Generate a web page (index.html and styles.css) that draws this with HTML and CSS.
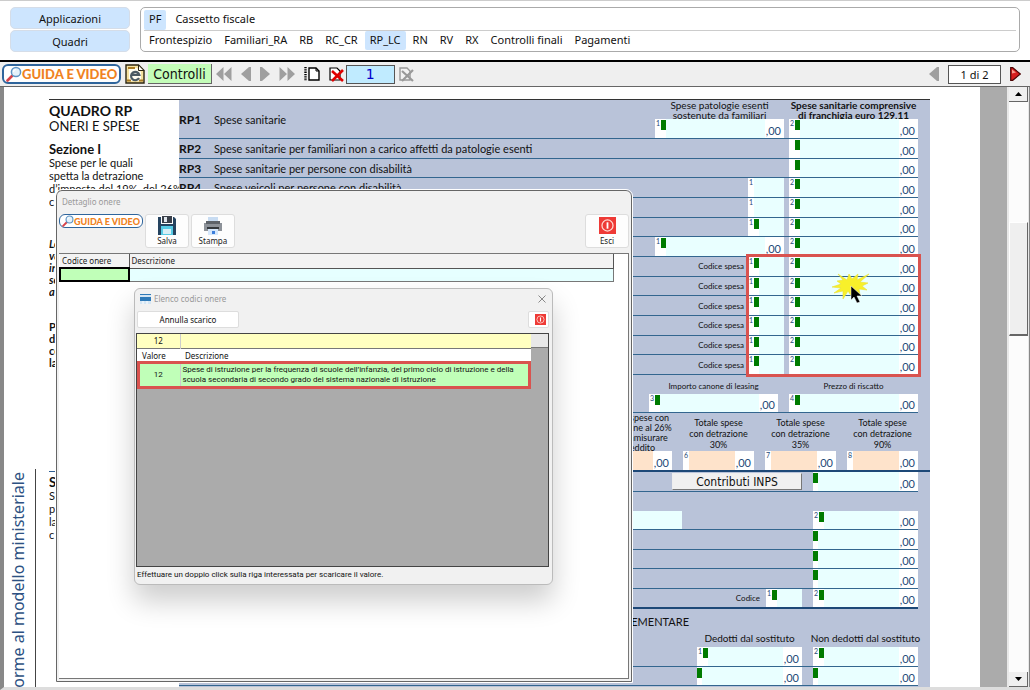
FILE: index.html
```html
<!DOCTYPE html>
<html lang="it">
<head>
<meta charset="utf-8">
<title>Quadro RP</title>
<link rel="stylesheet" href="styles.css">
</head>
<body>
<svg class="defs" aria-hidden="true">
  <symbol id="lens" viewBox="0 0 16 16"><path d="M1.5 14.5 6 10" stroke="#d8434a" stroke-width="2.6" stroke-linecap="round"/><circle cx="10" cy="6" r="4.6" fill="#e4f1fa" stroke="#5d93c4" stroke-width="1.5"/><path d="M7.5 6a2.5 2.5 0 0 1 2.5-2.5" fill="none" stroke="#fff" stroke-width="1.2"/></symbol>
  <symbol id="power" viewBox="0 0 16 16"><path fill="#ee3a36" d="M0 0h16v16H0z"/><circle cx="8" cy="8" r="5.2" fill="none" stroke="#ffd9d2" stroke-width="1.2"/><path d="M8 5v6" stroke="#fff" stroke-width="1.7"/></symbol>
</svg>
<div class="app">
  <header class="top">
    <div class="modes">
      <button class="mode">Applicazioni</button>
      <button class="mode">Quadri</button>
    </div>
    <nav class="tabs">
      <div class="tabrow apps">
        <a class="tab on" href="#pf">PF</a><a class="tab" href="#cassetto">Cassetto fiscale</a>
      </div>
      <div class="tabrow">
        <a class="tab" href="#f">Frontespizio</a><a class="tab" href="#ra">Familiari_RA</a><a class="tab" href="#rb">RB</a><a class="tab" href="#rc">RC_CR</a><a class="tab on" href="#rp">RP_LC</a><a class="tab" href="#rn">RN</a><a class="tab" href="#rv">RV</a><a class="tab" href="#rx">RX</a><a class="tab" href="#cf">Controlli finali</a><a class="tab" href="#pg">Pagamenti</a>
      </div>
    </nav>
  </header>

  <div class="toolbar">
    <button class="guide"><svg class="lens"><use href="#lens"/></svg>GUIDA E VIDEO</button>
    <button class="icon" aria-label="Documento"><svg width="20" height="20" viewBox="0 0 20 20"><path d="M1 1h12.500l5.500 5.500V19H1z" fill="#f6e2a0" stroke="#2b2410" stroke-width="1.400"/><path d="M4 4h8l4 4v9H4z" fill="#fffdf0"/><path d="M13.500 1v5.500H19z" fill="#fff" stroke="#2b2410"/><path d="M3 4h7M2 16.500h4M14 16.500h4" stroke="#a77a22" stroke-width="2"/><path d="M14 14a4.200 4.200 0 1 1 .3-3.200H7" fill="none" stroke="#4b5a62" stroke-width="2.200"/></svg></button>
    <button class="check">Controlli</button>
    <button class="icon" aria-label="Primo"><svg width="16" height="14" viewBox="0 0 16 14"><path d="M7.500 0v14L0 7zM15.500 0v14L8 7z" fill="#9f9f9f"/></svg></button>
    <button class="icon" aria-label="Precedente"><svg width="10" height="14" viewBox="0 0 10 14"><path d="M8 0h2v14H8L0 7z" fill="#9f9f9f"/></svg></button>
    <button class="icon" aria-label="Successivo"><svg width="10" height="14" viewBox="0 0 10 14"><path d="M0 0h2l8 7-8 7H0z" fill="#9f9f9f"/></svg></button>
    <button class="icon" aria-label="Ultimo"><svg width="16" height="14" viewBox="0 0 16 14"><path d="M.500 0v14L8 7zM8.500 0v14L16 7z" fill="#9f9f9f"/></svg></button>
    <button class="icon" aria-label="Nuovo modulo"><svg width="16" height="14" viewBox="0 0 16 14"><path d="M5 1h7l3 3v9H5z" fill="#fff" stroke="#000" stroke-width="1.400"/><path d="M12 1v3h3" fill="none" stroke="#000"/><path d="M1.500 0v14" stroke="#000" stroke-width="2.400" stroke-dasharray="1.300 1"/></svg></button>
    <button class="icon" aria-label="Elimina modulo"><svg width="15" height="15" viewBox="0 0 15 15"><path d="M1 1h7l3 3v9H1z" fill="#fff" stroke="#000" stroke-width="1.200"/><path d="m3 4 11 10M14 3 3 14" stroke="#e00000" stroke-width="2.600"/></svg></button>
    <input class="modulo" aria-label="Modulo" value="1">
    <button class="icon" aria-label="Elimina"><svg width="15" height="15" viewBox="0 0 15 15"><path d="M1 1h7l3 3v9H1z" fill="#f2f2f2" stroke="#999" stroke-width="1.400"/><path d="m3 4 11 10M14 3 3 14" stroke="#999" stroke-width="2.200"/></svg></button>
    <span class="grow"></span>
    <button class="icon" aria-label="Pagina precedente"><svg width="10" height="14" viewBox="0 0 10 14"><path d="M8 0h2v14H8L0 7z" fill="#9f9f9f"/></svg></button>
    <input class="pager" aria-label="Pagina" value="1 di 2">
    <button class="icon" aria-label="Pagina successiva"><svg width="11" height="14" viewBox="0 0 11 14"><path d="M.700.700h2L10.300 7l-7.600 6.300h-2z" fill="#d81e1e" stroke="#4d0505" stroke-width="1.200"/><path d="M2 2.500v4L6 5.500z" fill="#f79a8c"/></svg></button>
  </div>

  <main class="view">
    <div class="sheet">
      <div class="side"><p class="sidetext">Conforme al modello ministeriale</p></div>
      <section class="notes">
        <h1>QUADRO RP</h1>
        <p class="sub">ONERI E SPESE</p>
        <h2>Sezione I</h2>
        <p class="txt">Spese per le quali<br>spetta la detrazione<br>d’imposta del 19%, del 26%<br>c</p>
        <p class="em">Le<br>va<br>in<br>se<br>a</p>
        <p class="bold">Pe<br>de<br>co<br>la</p>
        <div class="sec2">
          <h2>Se</h2>
          <p class="txt">Sp<br>pe<br>la<br>c</p>
        </div>
      </section>

      <form class="form">
        <div class="row first">
          <b class="code">RP1</b><span class="desc">Spese sanitarie</span>
          <div class="stack w130"><span class="cap">Spese patologie esenti<br>sostenute da familiari</span><label class="field"><i>1</i><u></u><input aria-label="RP1 col 1"><span>,00</span></label></div>
          <div class="stack w130"><b class="cap">Spese sanitarie comprensive<br>di franchigia euro 129,11</b><label class="field"><i>2</i><u></u><input aria-label="RP1 col 2"><span>,00</span></label></div>
        </div>
        <div class="rows six">
          <div class="row"><b class="code">RP2</b><span class="desc">Spese sanitarie per familiari non a carico affetti da patologie esenti</span><label class="field w130"><i></i><u></u><input aria-label="RP2"><span>,00</span></label></div>
          <div class="row"><b class="code">RP3</b><span class="desc">Spese sanitarie per persone con disabilità</span><label class="field w130"><i></i><u></u><input aria-label="RP3"><span>,00</span></label></div>
          <div class="row"><b class="code">RP4</b><span class="desc">Spese veicoli per persone con disabilità</span><label class="field w36"><i>1</i><input aria-label="RP4 col 1"></label><label class="field w130"><i>2</i><u></u><input aria-label="RP4 col 2"><span>,00</span></label></div>
          <div class="row"><span class="desc"></span><label class="field w36"><i>1</i><input aria-label="RP5 col 1"></label><label class="field w130"><i>2</i><u></u><input aria-label="RP5 col 2"><span>,00</span></label></div>
          <div class="row"><span class="desc"></span><label class="field w36"><i>1</i><u></u><input aria-label="RP6 col 1"></label><label class="field w130"><i>2</i><u></u><input aria-label="RP6 col 2"><span>,00</span></label></div>
          <div class="row"><span class="desc"></span><label class="field w130"><i>1</i><u></u><input aria-label="RP7 col 1"><span>,00</span></label><label class="field w130"><i>2</i><u></u><input aria-label="RP7 col 2"><span>,00</span></label></div>
        </div>
        <div class="rows six codes">
          <div class="row"><span class="desc"></span><span class="mini">Codice spesa</span><label class="field w36"><i>1</i><u></u><input aria-label="RP8 codice"></label><label class="field w130"><i>2</i><u></u><input aria-label="RP8"><span>,00</span></label></div>
          <div class="row"><span class="desc"></span><span class="mini">Codice spesa</span><label class="field w36"><i>1</i><u></u><input aria-label="RP9 codice"></label><label class="field w130"><i>2</i><u></u><input aria-label="RP9"><span>,00</span></label></div>
          <div class="row"><span class="desc"></span><span class="mini">Codice spesa</span><label class="field w36"><i>1</i><u></u><input aria-label="RP10 codice"></label><label class="field w130"><i>2</i><u></u><input aria-label="RP10"><span>,00</span></label></div>
          <div class="row"><span class="desc"></span><span class="mini">Codice spesa</span><label class="field w36"><i>1</i><u></u><input aria-label="RP11 codice"></label><label class="field w130"><i>2</i><u></u><input aria-label="RP11"><span>,00</span></label></div>
          <div class="row"><span class="desc"></span><span class="mini">Codice spesa</span><label class="field w36"><i>1</i><u></u><input aria-label="RP12 codice"></label><label class="field w130"><i>2</i><u></u><input aria-label="RP12"><span>,00</span></label></div>
          <div class="row"><span class="desc"></span><span class="mini">Codice spesa</span><label class="field w36"><i>1</i><u></u><input aria-label="RP13 codice"></label><label class="field w130"><i>2</i><u></u><input aria-label="RP13"><span>,00</span></label></div>
          <div class="highlight"></div>
          <svg class="burst" width="38" height="33" viewBox="0 0 38 33"><path d="m6 1 9 6 2-6 3 5 6-5-1 6 12-6-9 8 8 1-6 3 5 4-8-1 1 6-6-4-2 6-4-6-5 8 0-8-9 2 7-5-9-1 9-3-4-3 6-1z" fill="#f8f02a" stroke="#eadf38" stroke-width=".6"/><path d="M19 13v14l3-3 3 6 3-1-3-6h5z" fill="#000" stroke="#fff" stroke-width=".5"/></svg>
        </div>
        <div class="row leasing">
          <div class="stack w130"><span class="head">Importo canone di leasing</span><label class="field"><i>3</i><u></u><input aria-label="Canone"><span>,00</span></label></div>
          <div class="stack w130"><span class="head">Prezzo di riscatto</span><label class="field"><i>4</i><u></u><input aria-label="Riscatto"><span>,00</span></label></div>
        </div>
        <div class="totals">
          <div class="total"><span class="four">Totale spese con<br>detrazione al 26%<br>da commisurare<br>al reddito</span><label class="field peach"><i>5</i><input aria-label="Totale 26"><span>,00</span></label></div>
          <div class="total"><span>Totale spese<br>con detrazione<br>30%</span><label class="field peach"><i>6</i><input aria-label="Totale 30"><span>,00</span></label></div>
          <div class="total"><span>Totale spese<br>con detrazione<br>35%</span><label class="field peach"><i>7</i><input aria-label="Totale 35"><span>,00</span></label></div>
          <div class="total"><span>Totale spese<br>con detrazione<br>90%</span><label class="field peach"><i>8</i><input aria-label="Totale 90"><span>,00</span></label></div>
        </div>
        <div class="row wide inps"><button type="button" class="inpsbtn">Contributi INPS</button><label class="field w106"><u></u><input aria-label="Contributi"><span>,00</span></label></div>
        <div class="rows five">
          <div class="row wide spouse"><label class="field w130"><input aria-label="Codice fiscale coniuge"></label><label class="field w106"><i>2</i><u></u><input aria-label="Coniuge"><span>,00</span></label></div>
          <div class="row wide"><label class="field w106"><u></u><input aria-label="RP23"><span>,00</span></label></div>
          <div class="row wide"><label class="field w106"><u></u><input aria-label="RP24"><span>,00</span></label></div>
          <div class="row wide"><label class="field w106"><u></u><input aria-label="RP25"><span>,00</span></label></div>
          <div class="row wide last"><span class="mini">Codice</span><label class="field w36"><i>1</i><u></u><input aria-label="RP26 codice"></label><label class="field w106"><i>2</i><u></u><input aria-label="RP26"><span>,00</span></label></div>
        </div>
        <p class="prev">COMPLEMENTARE</p>
        <div class="heads"><span>Dedotti dal sostituto</span><span>Non dedotti dal sostituto</span></div>
        <div class="rows two">
          <div class="row wide"><label class="field w106"><i>1</i><u></u><input aria-label="RP27 col 1"><span>,00</span></label><label class="field w106"><i>2</i><u></u><input aria-label="RP27 col 2"><span>,00</span></label></div>
          <div class="row wide"><label class="field w106"><u></u><input aria-label="RP28 col 1"><span>,00</span></label><label class="field w106"><u></u><input aria-label="RP28 col 2"><span>,00</span></label></div>
        </div>
      </form>
    </div>
    <div class="gutter"></div>
    <div class="scroll">
      <button class="arrow" aria-label="Su"><svg width="7" height="4"><path d="M0 4h7L3.500 0z"/></svg></button>
      <div class="track"><div class="thumb"></div></div>
      <button class="arrow" aria-label="Giù"><svg width="7" height="4"><path d="M0 0h7L3.500 4z"/></svg></button>
    </div>

    <div class="dialog" role="dialog" aria-label="Dettaglio onere">
      <div class="dtitle">Dettaglio onere</div>
      <div class="dtools">
        <button class="guide small"><svg class="lens"><use href="#lens"/></svg>GUIDA E VIDEO</button>
        <button class="tool"><svg width="20" height="20" viewBox="0 0 20 20"><path d="M1 1h3v7h12V1h1l2 2v16H1z" fill="#25435f"/><path d="M5 0h10v7H5z" fill="#3a3f49"/><path d="M7 1h3v5H7z" fill="#dfe6ec"/><path d="M4 10h12v9H4z" fill="#57cbe5"/><path d="M6 13h8v5H6z" fill="#d8eef5"/></svg>Salva</button>
        <button class="tool"><svg width="20" height="20" viewBox="0 0 20 20"><path d="M5 1h10v6H5z" fill="#c8dcf2"/><path d="M1 7h18v8H1z" fill="#8d9299"/><path d="M3 5h14v3H3z" fill="#5d6269"/><path d="M4 11h12v2H4z" fill="#33373c"/><path d="M5 13h10v6H5z" fill="#d5e7fb"/><path d="M9 15h3v3H9z" fill="#3c7edb"/></svg>Stampa</button>
        <span class="grow"></span>
        <button class="tool"><svg width="17" height="20" viewBox="0 0 17 20"><use href="#power" width="17" height="17" y="1"/></svg>Esci</button>
      </div>
      <div class="dbody">
        <table class="grid">
          <tr><th class="c1">Codice onere</th><th>Descrizione</th></tr>
          <tr><td class="sel"></td><td class="cy"></td></tr>
        </table>
      </div>
    </div>

    <div class="picker" role="dialog" aria-label="Elenco codici onere">
      <div class="ptitle"><svg width="11" height="10" viewBox="0 0 11 10"><path d="M0 0h11v10H0z" fill="#d5e6f4"/><path d="M0 0h11v1H0zM0 3h11v4H0z" fill="#2f7ab8"/><path d="M3 7v3M7 7v3" stroke="#fff"/></svg><span>Elenco codici onere</span><button class="close" aria-label="Chiudi"><svg width="8" height="8" viewBox="0 0 8 8"><path d="m.500.500 7 7m0-7-7 7" stroke="#888"/></svg></button></div>
      <div class="pbar"><button class="cancel">Annulla scarico</button><button class="exit" aria-label="Esci"><svg width="11" height="11"><use href="#power"/></svg></button></div>
      <div class="list">
        <table>
          <tr class="filter"><td class="v">12</td><td></td></tr>
          <tr class="lh"><th>Valore</th><th>Descrizione</th></tr>
          <tr class="hit"><td class="v">12</td><td>Spese di istruzione per la frequenza di scuole dell’infanzia, del primo ciclo di istruzione e della<br>scuola secondaria di secondo grado del sistema nazionale di istruzione</td></tr>
        </table>
        <div class="corner"></div>
      </div>
      <p class="hint">Effettuare un doppio click sulla riga interessata per scaricare il valore.</p>
    </div>
  </main>
</div>
</body>
</html>
```
FILE: styles.css
```css
* { box-sizing: border-box; }
body, h1, h2, p { margin: 0; }
body { background: #fff; color: #111; font-family: "Noto Sans", sans-serif; }
button, input { font: inherit; color: inherit; padding: 0; margin: 0; border: 0; border-radius: 0; background: none; }
input { min-width: 0; outline: 0; }
table { border-collapse: collapse; }
.defs { position: absolute; width: 0; height: 0; }
.grow { flex: 1; }
.app { display: flex; flex-direction: column; height: 100vh; overflow: hidden; }

/* top navigation */
.top { display: flex; gap: 10px; height: 60px; padding: 6px 10px 8px; border-top: 1px solid #ccc; font-size: 11px; }
.modes { display: flex; flex-direction: column; gap: 1px; width: 120px; }
.mode { height: 22px; border: 1px solid #d5dde8; border-radius: 5px; background: #cde5fe; }
.tabs { flex: 1; height: 45px; padding: 2px 3px; border: 1px solid #aaa; border-radius: 5px; }
.tabrow { display: flex; gap: 2px; height: 20px; }
.tabrow.apps { gap: 4px; }
.tabrow + .tabrow { border-top: 1px solid #ccc; }
.tab { padding: 0 5px; line-height: 18px; color: #111; text-decoration: none; border-radius: 2px; }
.tab.on { background: #cde5fe; }

/* toolbar */
.toolbar { display: flex; align-items: center; gap: 9px; height: 27px; padding: 0 9px 0 2px; border-top: 2px solid #000; border-bottom: 1px solid #666; background: #efefef; }
.guide { display: flex; align-items: center; height: 20px; padding: 0 2px; border: 2px solid #2f659c; border-radius: 6px; background: #fff; color: #f08222; font: 900 13px Lato, sans-serif; white-space: nowrap; }
.lens { width: 16px; height: 16px; }
.icon { display: flex; flex: none; }
.guide + .icon { margin-left: -5px; }
.check { height: 20px; margin-left: -6px; padding: 0 5px; border-right: 1px solid #666; border-bottom: 1px solid #666; background: #c3fdb8; font: 14px "DejaVu Sans Condensed", "DejaVu Sans", sans-serif; }
.check + .icon { margin-left: -5px; }
.modulo { width: 49px; height: 19px; margin-left: -7px; border: 1px solid #555; background: #c0ebff; color: #00c; font: 14px "DejaVu Sans", sans-serif; text-align: center; }
.modulo + .icon { margin-left: -5px; }
.pager { width: 53px; height: 19px; border: 1px solid #555; background: #fff; font-size: 11px; text-align: center; }

/* document viewport */
.view { position: relative; display: flex; flex: 1; border-left: 4px solid #888; border-bottom: 3px solid #ddd; background: #fff; overflow: hidden; }
.sheet { display: flex; flex: 1; padding-right: 50px; overflow: hidden; font-family: Lato, sans-serif; }
.gutter { width: 27px; background: #ababab; }
.side { width: 32px; margin: 382px 13px 0 0; border-right: 1px solid #444; overflow: hidden; }
.sidetext { margin: 3px 0 0 2px; writing-mode: vertical-rl; transform: rotate(180deg); font: 16px/24px "Noto Sans", sans-serif; color: #2d5182; white-space: nowrap; }
.notes { width: 130px; margin-top: 12px; border-top: 1px solid #333; white-space: nowrap; overflow: hidden; }
.notes h1 { margin-top: 3px; font-size: 14px; line-height: 16px; }
.notes h2 { font-size: 13px; line-height: 14px; }
.sub { font-size: 13px; line-height: 14px; margin-bottom: 9px; }
.txt { font-size: 11px; line-height: 13px; }
.em { margin-top: 30px; font-size: 11px; line-height: 12px; font-weight: bold; font-style: italic; }
.bold { margin-top: 23px; font-size: 11px; line-height: 12px; font-weight: bold; }
.sec2 { margin-top: 102px; border-top: 1px solid #2f5f94; padding-top: 3px; }

/* form */
.form { flex: 1; margin-top: 12px; border-top: 1px solid #333; background: #b9c3d9; font-size: 11px; white-space: nowrap; overflow: hidden; }
.row { display: flex; flex: 1; align-items: stretch; gap: 5px; min-height: 0; margin-right: 12px; border-bottom: 1px solid #33668f; }
.row.wide { gap: 11px; justify-content: flex-end; }
.rows { display: flex; flex-direction: column; }
.first { height: 39px; }
.six { height: 118px; }
.five { height: 98px; margin-top: 19px; }
.two { height: 39px; }
.code { width: 30px; align-self: center; font-size: 12px; }
.desc { flex: 1; align-self: center; }
.mini { align-self: center; font-size: 8px; }
.stack { display: flex; flex-direction: column; }
.stack .field { flex: 1; }
.cap { height: 19px; font-size: 10px; line-height: 10px; text-align: center; }
.stack .cap { margin: 0 -4px; }
.head { height: 19px; font-size: 8px; line-height: 23px; text-align: center; }
.w130 { width: 129px; }
.w36 { width: 36px; }
.w106 { width: 105px; }
.codes .mini { margin-right: -1px; }
.field { display: flex; align-items: stretch; background: #fff; color: #1f4a78; overflow: hidden; }
.field i { width: 6px; padding-left: 1px; font: 7px/8px Lato, sans-serif; }
.field u { width: 5px; height: 10px; margin-top: 1px; background: #007b00; }
.field input { flex: 1; height: 100%; background: #e9ffff; }
.field span { width: 19px; padding-right: 3px; font-size: 11px; line-height: 14px; text-align: right; align-self: flex-end; }
.peach input { background: #fee3cb; }
.codes { position: relative; }
.highlight { position: absolute; top: -3px; bottom: -2px; right: 9px; width: 175px; border: 3px solid #d9534f; pointer-events: none; }
.burst { position: absolute; top: 16px; right: 60px; }
.leasing { height: 38px; gap: 11px; justify-content: flex-end; }
.totals { display: flex; justify-content: flex-end; gap: 11px; height: 59px; padding-right: 12px; border-bottom: 2px solid #1d4877; }
.total { display: flex; flex-direction: column; width: 71px; text-align: center; font-size: 9px; line-height: 11px; }
.total > span { height: 38px; margin: 0 -8px; padding-top: 4px; }
.total > .four { padding-top: 0; line-height: 10px; }
.total .field { flex: 1; text-align: left; }
.inps { height: 20px; }
.inpsbtn { width: 130px; height: 17px; margin-top: 1px; border: 1px solid #eee; border-right-color: #777; border-bottom-color: #777; background: #f0f0f0; font: 12px "DejaVu Sans Condensed", "DejaVu Sans", sans-serif; color: #111; }
.row.spouse { gap: 131px; }
.row.last { border-bottom: 2px solid #1d4877; }
.last .mini { margin-right: -5px; }
.prev { padding: 5px 241px 0 0; text-align: right; font-size: 11px; line-height: 15px; }
.heads { display: flex; justify-content: flex-end; gap: 3px; padding-right: 8px; font-size: 10px; line-height: 18px; }
.heads span { width: 113px; text-align: center; }

/* vertical scroll bar */
.scroll { display: flex; flex-direction: column; width: 23px; padding: 0 1px 0 2px; border-right: 1px solid #888; background: #e8e8e8; }
.arrow { display: flex; align-items: center; justify-content: center; height: 15px; background: #efefef; border-right: 1px solid #666; border-bottom: 1px solid #666; }
.track { flex: 1; background: #fcfcfc; }
.thumb { height: 114px; margin-top: 120px; border: 1px solid #fff; border-right-color: #666; border-bottom: 2px solid #666; background: #efefef; }

/* detail window */
.dialog { position: absolute; left: 52px; top: 103px; width: 576px; height: 492px; display: flex; flex-direction: column; padding: 0 2px 2px; border: 1px solid #666; border-radius: 6px 6px 0 0; outline: 1px solid #fff; background: #f1f1f1; font-size: 8px; color: #222; }
.dtitle { padding: 5px 3px 0; height: 23px; font-size: 8px; line-height: 12px; color: #999; }
.dtools { display: flex; align-items: flex-start; gap: 2px; height: 39px; }
.small { height: 14px; border-width: 1px; font-size: 9px; padding: 0 2px; }
.small .lens { width: 12px; height: 12px; }
.tool { display: flex; flex-direction: column; align-items: center; width: 44px; height: 34px; padding-top: 1px; border: 1px solid #ddd; border-radius: 3px; background: #fdfdfd; line-height: 10px; }
.dbody { flex: 1; border: 1px solid #777; border-left: 0; background: #fff; }
.grid { width: 555px; table-layout: fixed; }
.grid th { height: 14px; padding: 0 2px; border-right: 1px solid #555; border-bottom: 1px solid #555; background: #f3f3f3; text-align: left; font-weight: normal; line-height: 12px; }
.grid td { height: 13px; padding: 0; border: 1px solid #777; }
.grid .c1 { width: 69px; }
.grid .sel { border: 2px solid #000; background: #c0ffb8; }
.grid .cy { background: #e6ffff; }

/* code picker window */
.picker { position: absolute; left: 130px; top: 201px; width: 419px; height: 297px; display: flex; flex-direction: column; padding: 0 3px 0 1px; border: 1px solid #bbb; border-radius: 6px; background: #f1f1f1; box-shadow: 0 16px 28px rgba(0,0,0,.2); font-size: 8px; color: #111; }
.ptitle { display: flex; align-items: center; gap: 3px; height: 19px; padding: 0 3px 0 4px; color: #999; }
.close { display: flex; margin-left: auto; }
.pbar { display: flex; justify-content: space-between; height: 25px; padding-top: 3px; padding-left: 1px; }
.cancel { width: 102px; height: 17px; border: 1px solid #ddd; border-radius: 2px; background: #fff; }
.exit { display: flex; align-items: center; justify-content: flex-end; width: 21px; height: 17px; padding-right: 2px; border: 1px solid #ddd; border-radius: 2px; background: #fff; }
.list { display: flex; flex: 1; align-items: flex-start; border: 1px solid #444; background: #ababab; }
.list table { flex: 1; table-layout: fixed; }
.list td, .list th { padding: 0 2px; font-weight: normal; text-align: left; line-height: 10px; }
.list .v { width: 43px; text-align: center; border-right: 1px solid #ccc; }
.filter { height: 14px; background: #ffffc0; border-bottom: 1px solid #777; }
.lh { background: #fff; }
.lh th { height: 12px; padding: 2px 5px 0; }
.hit { height: 28px; background: #c0ffb8; outline: 3px solid #d9534f; outline-offset: -3px; }
.hit td { white-space: nowrap; font-family: Roboto, sans-serif; }
.corner { width: 17px; height: 14px; background: #e8e8e8; border-bottom: 1px solid #777; }
.hint { height: 17px; padding-left: 1px; line-height: 16px; font-family: Roboto, sans-serif; }
```
